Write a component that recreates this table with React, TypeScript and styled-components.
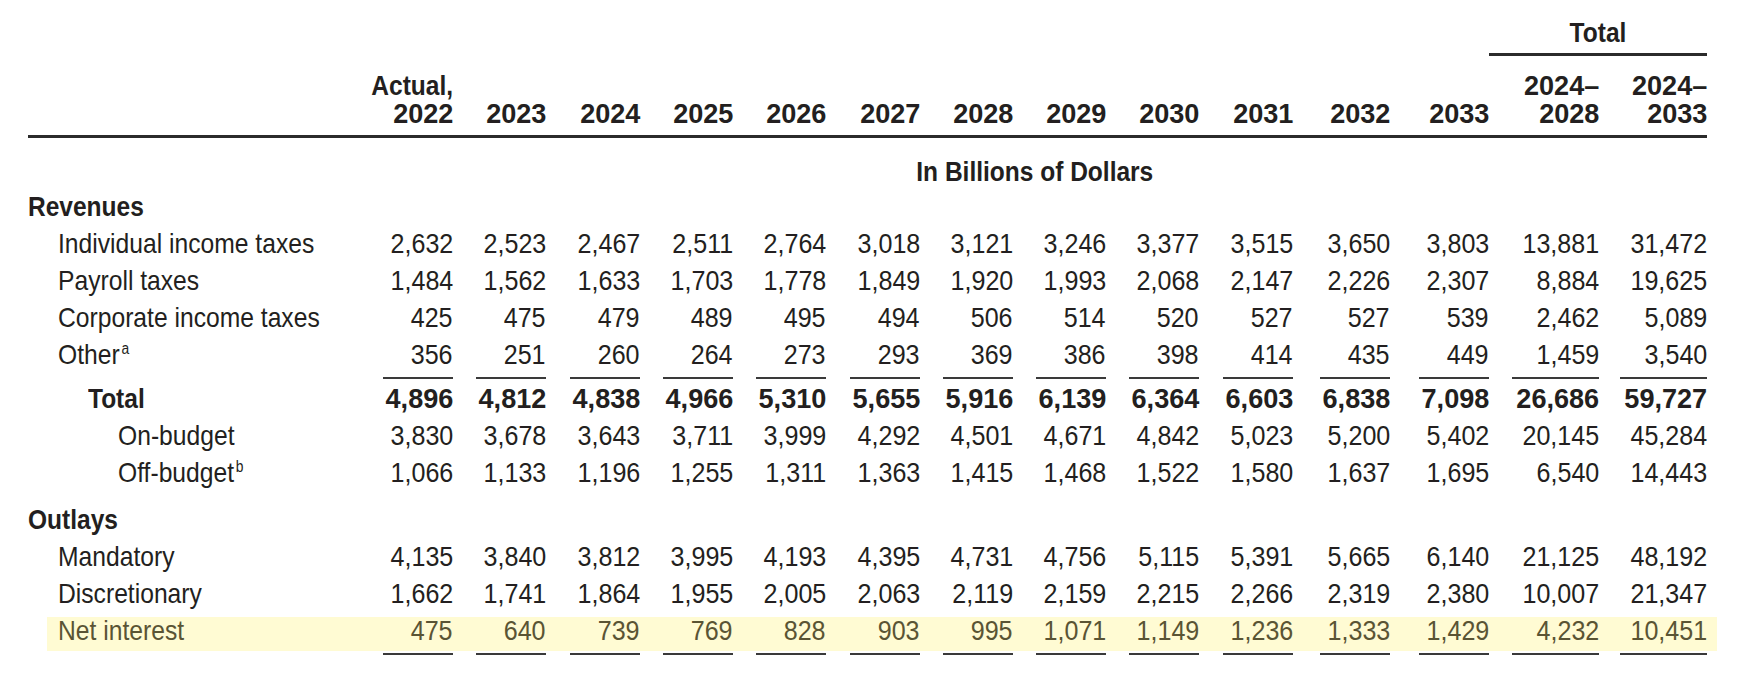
import React from "react";
import styled, { createGlobalStyle } from "styled-components";

const GlobalStyle = createGlobalStyle`
  html, body {
    margin: 0;
    padding: 0;
    background: #ffffff;
  }
  body {
    font-family: "Liberation Sans", Arial, sans-serif;
    color: #231f20;
  }
`;

const COLS = [70, 93, 94, 93, 93, 94, 93, 93, 93, 94, 97, 99, 110, 108];
const RULE_W = [70, 70, 70, 70, 70, 70, 70, 70, 70, 70, 70, 70, 87, 87];
const LABEL_W = 355;
const WORD_SCALE = 0.86;
const LABEL_SCALE = 0.865;
const DIGIT_SCALE = 0.88;
const BOLD_DIGIT_SCALE = 0.95;

const template = (labelWidth: number) =>
  `${labelWidth}px ${COLS.map((c) => `${c}px`).join(" ")}`;

const Page = styled.div`
  padding: 14px 0 0 28px;
  width: 1679px;
  font-size: 28.5px;
`;

/* Condensed text: the reference face is a narrow sans, so the glyphs are squeezed horizontally */
const Squeeze = styled.span<{ $scale: number; $origin: "left" | "right" | "center" }>`
  display: inline-block;
  white-space: nowrap;
  transform: scaleX(${(p) => p.$scale});
  transform-origin: ${(p) => p.$origin} center;
`;

const Row = styled.div<{ $labelWidth?: number }>`
  display: grid;
  grid-template-columns: ${(p) => template(p.$labelWidth ?? LABEL_W)};
  line-height: 37px;
`;

const GroupHeaderRow = styled(Row)``;

const GroupCell = styled.div`
  grid-column: 14 / span 2;
  display: flex;
  justify-content: center;
  font-weight: 700;
  padding-bottom: 2px;
  border-bottom: 3px solid #2b2b2b;
`;

const YearHeaderRow = styled(Row)`
  margin-top: 15px;
  align-items: end;
  padding-bottom: 8px;
  border-bottom: 3px solid #2b2b2b;
  line-height: 28px;
`;

const HeadCell = styled.div`
  display: flex;
  flex-direction: column;
  align-items: flex-end;
  font-weight: 700;
`;

const UnitRow = styled(Row)`
  margin-top: 17px;
  line-height: 33px;
`;

const UnitCell = styled.div`
  grid-column: 2 / -1;
  display: flex;
  justify-content: center;
  font-weight: 700;
  padding-right: 21px;
`;

const DataRow = styled(Row)<{ $bold?: boolean; $gapTop?: number }>`
  font-weight: ${(p) => (p.$bold ? 700 : 400)};
  margin-top: ${(p) => p.$gapTop ?? 0}px;
`;

const HighlightRow = styled(Row)`
  margin: 5px -10px 0 19px;
  padding-right: 10px;
  line-height: 27px;
  padding-bottom: 7px;
  background: #fffbd3;
  color: #5a5434;
`;

const Label = styled.div<{ $indent: number; $bold?: boolean }>`
  padding-left: ${(p) => p.$indent}px;
  font-weight: ${(p) => (p.$bold ? 700 : "inherit")};
  white-space: nowrap;
`;

const NumCell = styled.div`
  display: flex;
  justify-content: flex-end;
`;

const Sup = styled.span`
  font-size: 16px;
  line-height: 0;
  vertical-align: 10px;
  margin-left: 2px;
`;

const RuleRow = styled(Row)<{ $gapTop: number }>`
  margin-top: ${(p) => p.$gapTop}px;
  line-height: 0;
`;

const RuleCell = styled.div`
  display: flex;
  justify-content: flex-end;
`;

const Rule = styled.div<{ $w: number }>`
  width: ${(p) => p.$w}px;
  height: 2px;
  background: #3a3a3a;
`;

const years = [
  "2023", "2024", "2025", "2026", "2027", "2028", "2029", "2030", "2031", "2032", "2033",
];

type Line = {
  label: string;
  sup?: string;
  values: string[];
};

const revenues: Line[] = [
  {
    label: "Individual income taxes",
    values: ["2,632", "2,523", "2,467", "2,511", "2,764", "3,018", "3,121", "3,246", "3,377", "3,515", "3,650", "3,803", "13,881", "31,472"],
  },
  {
    label: "Payroll taxes",
    values: ["1,484", "1,562", "1,633", "1,703", "1,778", "1,849", "1,920", "1,993", "2,068", "2,147", "2,226", "2,307", "8,884", "19,625"],
  },
  {
    label: "Corporate income taxes",
    values: ["425", "475", "479", "489", "495", "494", "506", "514", "520", "527", "527", "539", "2,462", "5,089"],
  },
  {
    label: "Other",
    sup: "a",
    values: ["356", "251", "260", "264", "273", "293", "369", "386", "398", "414", "435", "449", "1,459", "3,540"],
  },
];

const total = ["4,896", "4,812", "4,838", "4,966", "5,310", "5,655", "5,916", "6,139", "6,364", "6,603", "6,838", "7,098", "26,686", "59,727"];

const budget: Line[] = [
  {
    label: "On-budget",
    values: ["3,830", "3,678", "3,643", "3,711", "3,999", "4,292", "4,501", "4,671", "4,842", "5,023", "5,200", "5,402", "20,145", "45,284"],
  },
  {
    label: "Off-budget",
    sup: "b",
    values: ["1,066", "1,133", "1,196", "1,255", "1,311", "1,363", "1,415", "1,468", "1,522", "1,580", "1,637", "1,695", "6,540", "14,443"],
  },
];

const outlays: Line[] = [
  {
    label: "Mandatory",
    values: ["4,135", "3,840", "3,812", "3,995", "4,193", "4,395", "4,731", "4,756", "5,115", "5,391", "5,665", "6,140", "21,125", "48,192"],
  },
  {
    label: "Discretionary",
    values: ["1,662", "1,741", "1,864", "1,955", "2,005", "2,063", "2,119", "2,159", "2,215", "2,266", "2,319", "2,380", "10,007", "21,347"],
  },
];

const netInterest = ["475", "640", "739", "769", "828", "903", "995", "1,071", "1,149", "1,236", "1,333", "1,429", "4,232", "10,451"];

const Numbers: React.FC<{ values: string[]; bold?: boolean }> = ({ values, bold }) => (
  <>
    {values.map((v, i) => (
      <NumCell key={i}>
        <Squeeze $scale={bold ? BOLD_DIGIT_SCALE : DIGIT_SCALE} $origin="right">
          {v}
        </Squeeze>
      </NumCell>
    ))}
  </>
);

const Rules: React.FC<{ gapTop: number }> = ({ gapTop }) => (
  <RuleRow $gapTop={gapTop}>
    <div />
    {RULE_W.map((w, i) => (
      <RuleCell key={i}>
        <Rule $w={w} />
      </RuleCell>
    ))}
  </RuleRow>
);

const LabelText: React.FC<{ text: string; sup?: string; bold?: boolean }> = ({ text, sup, bold }) => (
  <Squeeze $scale={bold ? WORD_SCALE : LABEL_SCALE} $origin="left">
    {text}
    {sup && <Sup>{sup}</Sup>}
  </Squeeze>
);

const LineRow: React.FC<{ line: Line; indent: number }> = ({ line, indent }) => (
  <DataRow>
    <Label $indent={indent}>
      <LabelText text={line.label} sup={line.sup} />
    </Label>
    <Numbers values={line.values} />
  </DataRow>
);

const HeadLine: React.FC<{ text: string; word?: boolean }> = ({ text, word }) => (
  <Squeeze $scale={word ? WORD_SCALE : BOLD_DIGIT_SCALE} $origin="right">
    {text}
  </Squeeze>
);

export default function App() {
  return (
    <>
      <GlobalStyle />
      <Page>
        <GroupHeaderRow>
          <GroupCell>
            <Squeeze $scale={WORD_SCALE} $origin="center">
              Total
            </Squeeze>
          </GroupCell>
        </GroupHeaderRow>
        <YearHeaderRow>
          <div />
          <HeadCell>
            <HeadLine text="Actual," word />
            <HeadLine text="2022" />
          </HeadCell>
          {years.map((y) => (
            <HeadCell key={y}>
              <HeadLine text={y} />
            </HeadCell>
          ))}
          <HeadCell>
            <HeadLine text="2024–" />
            <HeadLine text="2028" />
          </HeadCell>
          <HeadCell>
            <HeadLine text="2024–" />
            <HeadLine text="2033" />
          </HeadCell>
        </YearHeaderRow>
        <UnitRow>
          <UnitCell>
            <Squeeze $scale={WORD_SCALE} $origin="center">
              In Billions of Dollars
            </Squeeze>
          </UnitCell>
        </UnitRow>

        <DataRow>
          <Label $indent={0} $bold>
            <LabelText text="Revenues" bold />
          </Label>
        </DataRow>
        {revenues.map((l) => (
          <LineRow key={l.label} line={l} indent={30} />
        ))}
        <Rules gapTop={4} />
        <DataRow $bold $gapTop={1}>
          <Label $indent={60}>
            <LabelText text="Total" bold />
          </Label>
          <Numbers values={total} bold />
        </DataRow>
        {budget.map((l) => (
          <LineRow key={l.label} line={l} indent={90} />
        ))}

        <DataRow $gapTop={10}>
          <Label $indent={0} $bold>
            <LabelText text="Outlays" bold />
          </Label>
        </DataRow>
        {outlays.map((l) => (
          <LineRow key={l.label} line={l} indent={30} />
        ))}
        <HighlightRow $labelWidth={LABEL_W - 19}>
          <Label $indent={11}>
            <LabelText text="Net interest" />
          </Label>
          <Numbers values={netInterest} />
        </HighlightRow>
        <Rules gapTop={2} />
      </Page>
    </>
  );
}
